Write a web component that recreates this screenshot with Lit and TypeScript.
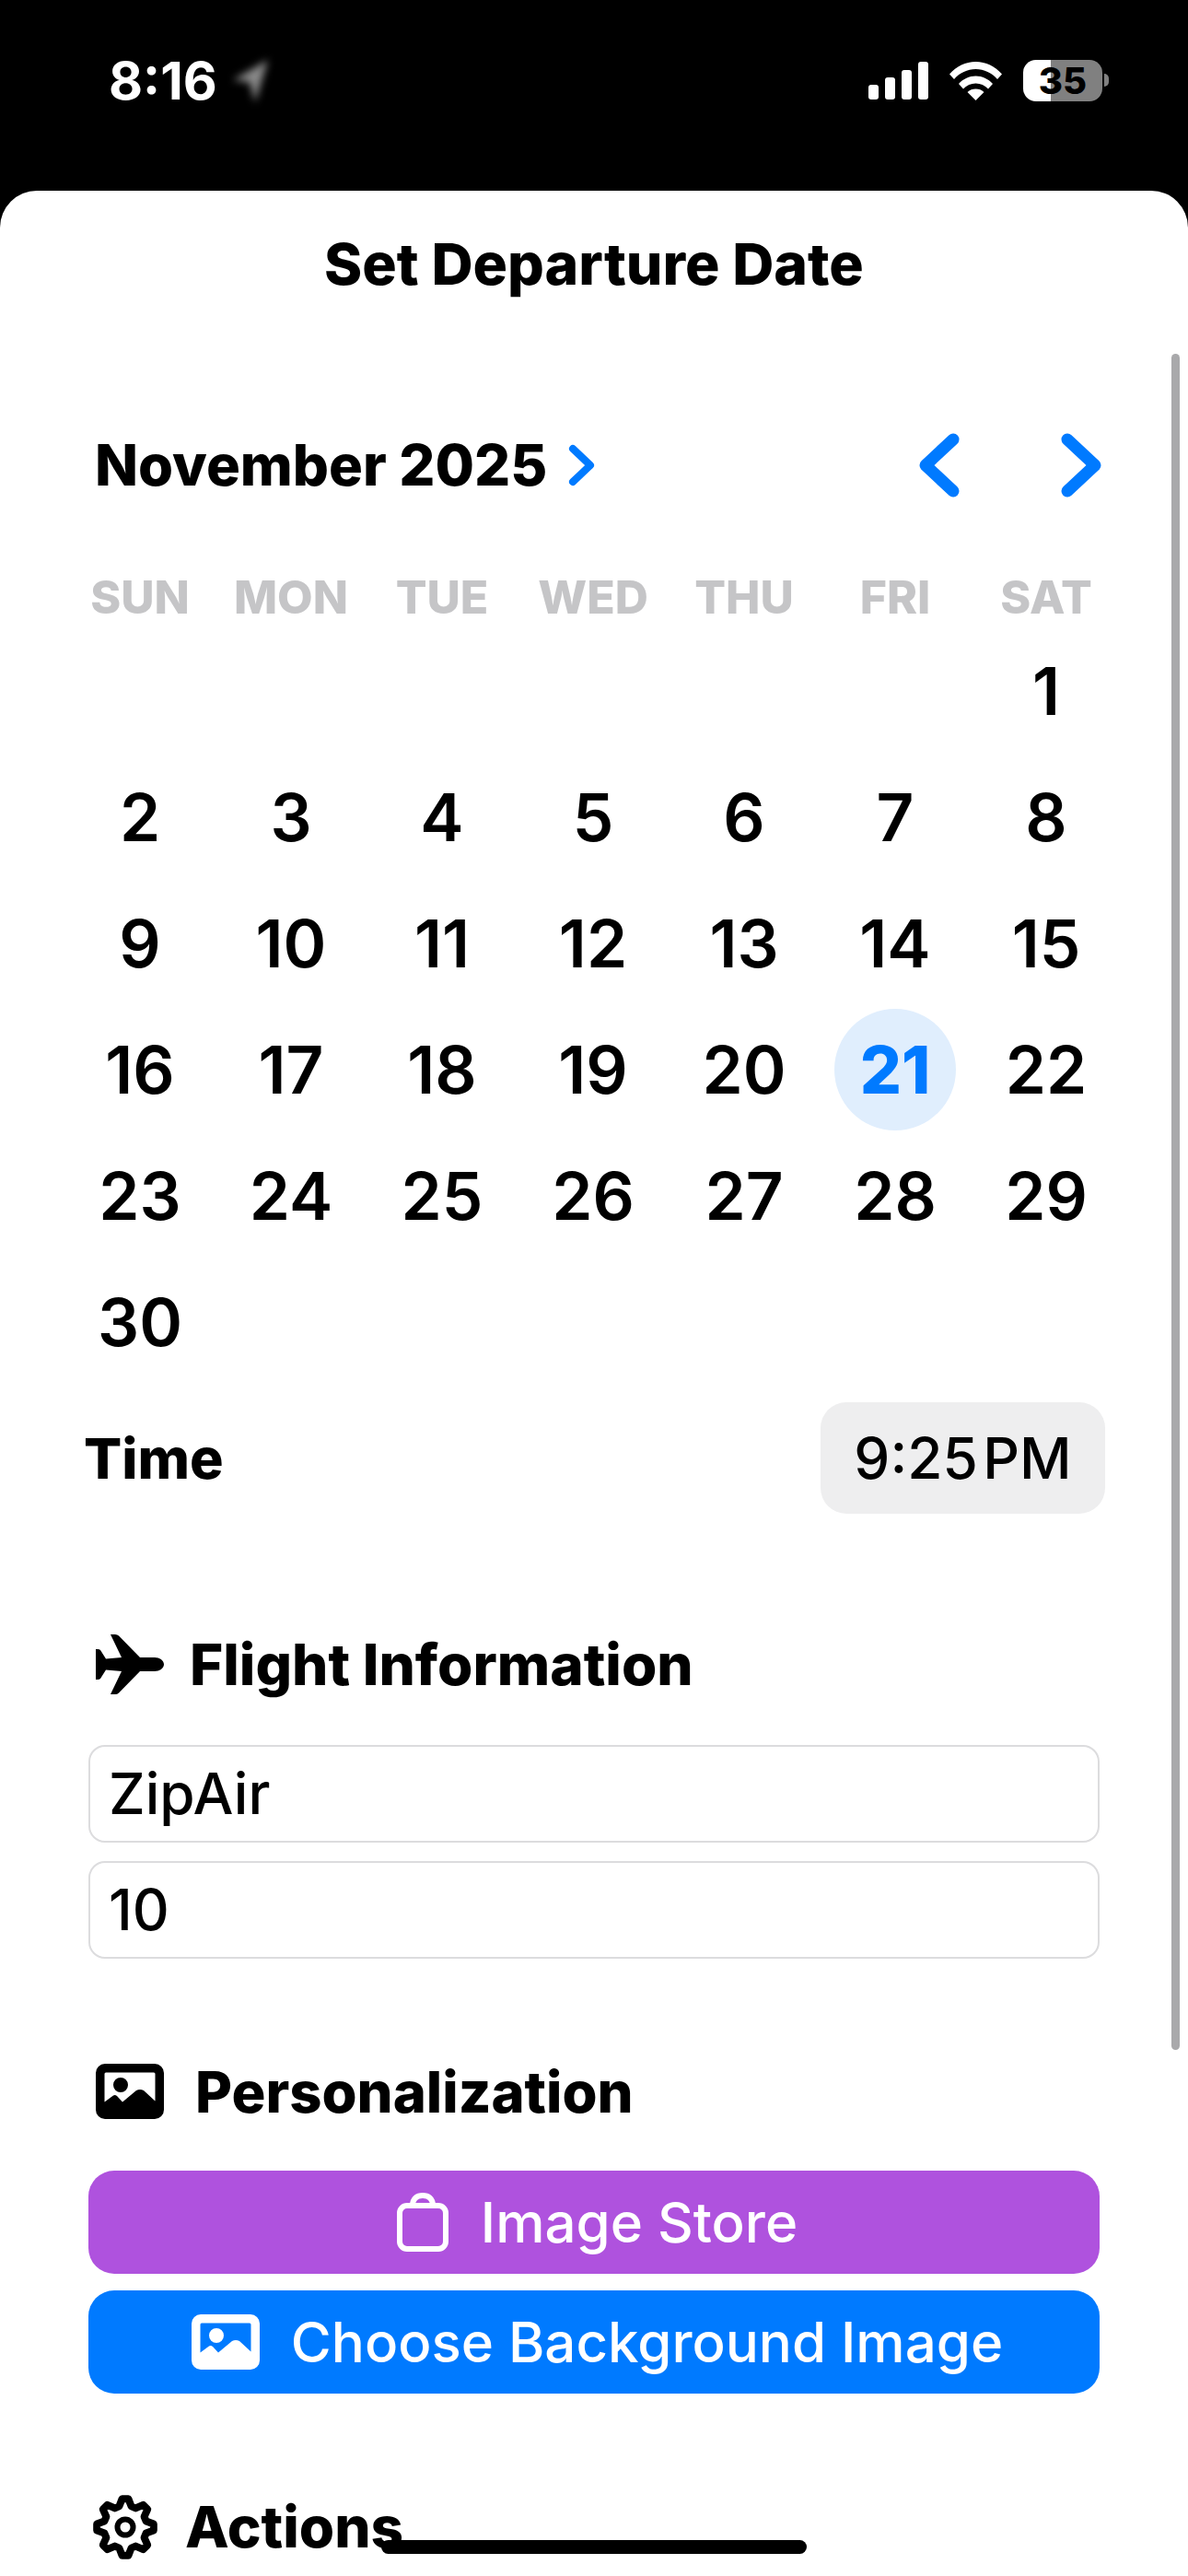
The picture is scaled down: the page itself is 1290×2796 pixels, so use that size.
import { html, css, svg, LitElement } from "lit";
import { customElement } from "lit/decorators.js";

const WEEKDAYS = ["SUN", "MON", "TUE", "WED", "THU", "FRI", "SAT"];
const FIRST_OFFSET = 6;
const DAYS_IN_MONTH = 30;
const SELECTED_DAY = 21;

function gearPath() {
  const pts: string[] = [];
  const teeth = 8;
  for (let i = 0; i < teeth; i++) {
    const a = (i / teeth) * Math.PI * 2 - Math.PI / 2;
    const step = (Math.PI * 2) / teeth;
    const rows: [number, number][] = [
      [-0.36, 23.5],
      [-0.14, 31],
      [0.14, 31],
      [0.36, 23.5],
    ];
    for (const [f, r] of rows) {
      const t = a + f * step;
      pts.push(`${(35 + Math.cos(t) * r).toFixed(1)} ${(35 + Math.sin(t) * r).toFixed(1)}`);
    }
  }
  return `M${pts.join("L")}Z`;
}

const imageIcon = svg`<path fill-rule="evenodd" d="M10 0H64A10 10 0 0 1 74 10V50A10 10 0 0 1 64 60H10A10 10 0 0 1 0 50V10A10 10 0 0 1 10 0ZM11 9.5A1.5 1.5 0 0 0 9.5 11V41.5L19 34.5Q21 33.5 23 35L29 41.5L44 29Q48 27 52 29L64.5 40.5V11A1.5 1.5 0 0 0 63 9.5ZM27 15A8 8 0 1 0 27 31A8 8 0 1 0 27 15Z"/>`;

@customElement("app-root")
export class AppRoot extends LitElement {
  static styles = css`
    :host {
      display: block;
      position: relative;
      width: 1290px;
      height: 2796px;
      overflow: hidden;
      background: #000;
      font-family: Inter, "Liberation Sans", sans-serif;
      color: #000;
    }

    .status {
      display: flex;
      align-items: center;
      justify-content: space-between;
      height: 175px;
      padding: 0 93px 0 118px;
      box-sizing: border-box;
      color: #fff;
    }

    .status-left {
      display: flex;
      align-items: center;
      gap: 15px;
      font-size: 57px;
      font-weight: 700;
    }

    .arrow {
      width: 42px;
      height: 50px;
      filter: blur(4px);
    }

    .status-right {
      display: flex;
      align-items: center;
      gap: 23px;
    }

    .battery {
      position: relative;
      display: flex;
      align-items: center;
      justify-content: center;
      width: 86px;
      height: 45px;
      border-radius: 14px;
      background: linear-gradient(90deg, #fff 30px, #808080 30px);
      color: #000;
      font-size: 40px;
      font-weight: 800;
      line-height: 45px;
    }

    .nub {
      position: absolute;
      left: 88px;
      top: 15px;
      width: 5px;
      height: 14px;
      border-radius: 0 7px 7px 0;
      background: #808080;
    }

    .sheet {
      height: 2589px;
      margin-top: 32px;
      border-radius: 40px 40px 0 0;
      background: #fff;
      overflow: hidden;
    }

    .title {
      height: 160px;
      line-height: 158px;
      text-align: center;
      font-size: 62.5px;
      font-weight: 800;
    }

    .month-row {
      display: flex;
      align-items: center;
      justify-content: space-between;
      height: 80px;
      margin-top: 98px;
      padding: 0 93px 0 103px;
    }

    .month {
      display: flex;
      align-items: center;
      gap: 23px;
      font-size: 61.5px;
      font-weight: 800;
      line-height: 80px;
    }

    .pager {
      display: flex;
      gap: 108px;
    }

    .cal {
      display: grid;
      grid-template-columns: repeat(7, 164px);
      padding-left: 70px;
    }

    .weekdays {
      margin-top: 73px;
      height: 60px;
      line-height: 60px;
      margin-bottom: 3.5px;
    }

    .wd {
      text-align: center;
      font-size: 50px;
      font-weight: 800;
      color: #c5c5c7;
    }

    .day {
      display: flex;
      align-items: center;
      justify-content: center;
      height: 137px;
      font-size: 71px;
      font-weight: 600;
      line-height: 135px;
    }

    .day.selected span {
      display: flex;
      align-items: center;
      justify-content: center;
      width: 132px;
      height: 132px;
      border-radius: 50%;
      background: #e0eefd;
      color: #007aff;
      font-weight: 800;
    }

    .time-row {
      display: flex;
      align-items: center;
      justify-content: space-between;
      margin-top: 18.5px;
      padding: 0 90px 0 91px;
    }

    .time-label {
      font-size: 61px;
      font-weight: 800;
    }

    .time-pill {
      display: flex;
      align-items: center;
      justify-content: center;
      width: 309px;
      height: 121px;
      border-radius: 28px;
      background: #eeeeef;
      font-size: 62px;
      font-weight: 500;
      word-spacing: -11px;
    }

    .section {
      display: flex;
      flex-direction: column;
      padding: 0 96px;
    }

    .heading {
      display: flex;
      align-items: center;
      margin-left: 8px;
      font-size: 62px;
      font-weight: 800;
    }

    .flight {
      margin-top: 131px;
    }

    .flight .heading {
      gap: 28px;
      height: 65px;
    }

    .field {
      box-sizing: border-box;
      height: 106px;
      margin-top: 20px;
      padding-left: 20px;
      border: 2px solid #dcdcde;
      border-radius: 18px;
      font-size: 62px;
      font-weight: 500;
      line-height: 102px;
    }

    .flight .heading + .field {
      margin-top: 55px;
    }

    .personal {
      margin-top: 114px;
    }

    .personal .heading {
      gap: 34px;
      height: 60px;
      font-size: 61.5px;
      line-height: 57px;
    }

    .btn {
      display: flex;
      align-items: center;
      justify-content: center;
      height: 112px;
      margin-top: 18px;
      border-radius: 28px;
      color: #fff;
      font-size: 60px;
      font-weight: 500;
      line-height: 110px;
    }

    .personal .heading + .btn {
      margin-top: 56px;
    }

    .store {
      gap: 35px;
      background: #af52de;
      padding-left: 7px;
    }

    .choose {
      gap: 34px;
      background: #007aff;
      padding-left: 7px;
    }

    .actions {
      margin-top: 110px;
    }

    .actions .heading {
      gap: 30px;
      height: 70px;
      margin-left: 5px;
      line-height: 68px;
    }

    svg {
      display: block;
      flex: none;
      fill: currentColor;
    }

    .line {
      fill: none;
      stroke: currentColor;
      stroke-linecap: round;
      stroke-linejoin: round;
    }

    .blue {
      color: #007aff;
    }

    .scrollbar {
      position: absolute;
      left: 1272px;
      top: 384px;
      width: 9px;
      height: 1841px;
      border-radius: 5px;
      background: #a9a9ab;
    }

    .home {
      position: absolute;
      left: 414px;
      top: 2757px;
      width: 462px;
      height: 15px;
      border-radius: 8px;
      background: #000;
    }
  `;

  private renderStatus() {
    return html`<div class="status">
      <div class="status-left">
        <span>8:16</span>
        <svg class="arrow" viewBox="0 0 42 50" style="fill:#8a8a8a">
          <path d="M40 2L26 48L20 26L2 24Z" />
        </svg>
      </div>
      <div class="status-right">
        <svg width="65" height="41" viewBox="0 0 65 41">
          <rect x="0" y="25" width="11" height="16" rx="3" />
          <rect x="18" y="17" width="11" height="24" rx="3" />
          <rect x="36" y="9" width="11" height="32" rx="3" />
          <rect x="54" y="0" width="11" height="41" rx="3" />
        </svg>
        <svg width="57" height="42" viewBox="0 0 57 42">
          <path
            d="M0 13.5C7.5 5 17.500 0 28.500 0S49.500 5 57 13.500L52 19C46 12 37.500 8 28.500 8S11 12 5 19Z"
          />
          <path
            d="M10 24C15 18.500 21.500 15.500 28.500 15.500S42 18.500 47 24L42 29.500C38.500 25.500 33.500 23.500 28.500 23.500S18.500 25.500 15 29.500Z"
          />
          <path d="M19.500 33C22 30.500 25 29.500 28.500 29.500S35 30.500 37.500 33L28.500 42Z" />
        </svg>
        <div class="battery">35<i class="nub"></i></div>
      </div>
    </div>`;
  }

  private renderCalendar() {
    const cells = [];
    for (let i = 0; i < FIRST_OFFSET; i++) cells.push(html`<div></div>`);
    for (let d = 1; d <= DAYS_IN_MONTH; d++) {
      cells.push(
        html`<div class="day ${d === SELECTED_DAY ? "selected" : ""}">
          <span>${d}</span>
        </div>`
      );
    }
    return html`<div class="month-row">
        <div class="month">
          <span>November 2025</span>
          <svg class="line blue" width="29" height="46" viewBox="0 0 29 46" stroke-width="8">
            <path d="M5 5L24 23L5 41" />
          </svg>
        </div>
        <div class="pager">
          <svg class="line blue" width="46" height="70" viewBox="0 0 46 70" stroke-width="13">
            <path d="M38 7L8 35L38 63" />
          </svg>
          <svg class="line blue" width="46" height="70" viewBox="0 0 46 70" stroke-width="13">
            <path d="M8 7L38 35L8 63" />
          </svg>
        </div>
      </div>
      <div class="cal weekdays">
        ${WEEKDAYS.map((w) => html`<div class="wd">${w}</div>`)}
      </div>
      <div class="cal">${cells}</div>`;
  }

  render() {
    return html`${this.renderStatus()}
      <div class="sheet">
        <div class="title">Set Departure Date</div>
        ${this.renderCalendar()}
        <div class="time-row">
          <span class="time-label">Time</span>
          <div class="time-pill">9:25 PM</div>
        </div>

        <div class="section flight">
          <div class="heading">
            <svg width="74" height="65" viewBox="0 0 74 65">
              <path
                d="M74 32.500C74 37 69 40 64 40H48L25 63.500Q23.500 65 21 65H16L28 40L11 38.500L5 48Q4 49 2 49H0V16H2Q4 16 5 17L11 26.500L28 25L16 0H21Q23.500 0 25 1.500L48 25H64C69 25 74 28 74 32.500Z"
              />
            </svg>
            <span>Flight Information</span>
          </div>
          <div class="field">ZipAir</div>
          <div class="field">10</div>
        </div>

        <div class="section personal">
          <div class="heading">
            <svg width="74" height="60" viewBox="0 0 74 60">${imageIcon}</svg>
            <span>Personalization</span>
          </div>
          <div class="btn store">
            <svg class="line" width="56" height="64" viewBox="0 0 56 64" stroke-width="6">
              <path d="M17 14C17 6 22 3 28 3S39 6 39 14" />
              <rect x="3" y="14" width="50" height="47" rx="8" />
            </svg>
            <span>Image Store</span>
          </div>
          <div class="btn choose">
            <svg width="74" height="60" viewBox="0 0 74 60">${imageIcon}</svg>
            <span>Choose Background Image</span>
          </div>
        </div>

        <div class="section actions">
          <div class="heading">
            <svg class="line" width="70" height="70" viewBox="0 0 70 70" stroke-width="8">
              <path d=${gearPath()} />
              <circle cx="35" cy="35" r="8.500" stroke-width="6" />
            </svg>
            <span>Actions</span>
          </div>
        </div>
      </div>
      <div class="scrollbar"></div>
      <div class="home"></div>`;
  }
}
